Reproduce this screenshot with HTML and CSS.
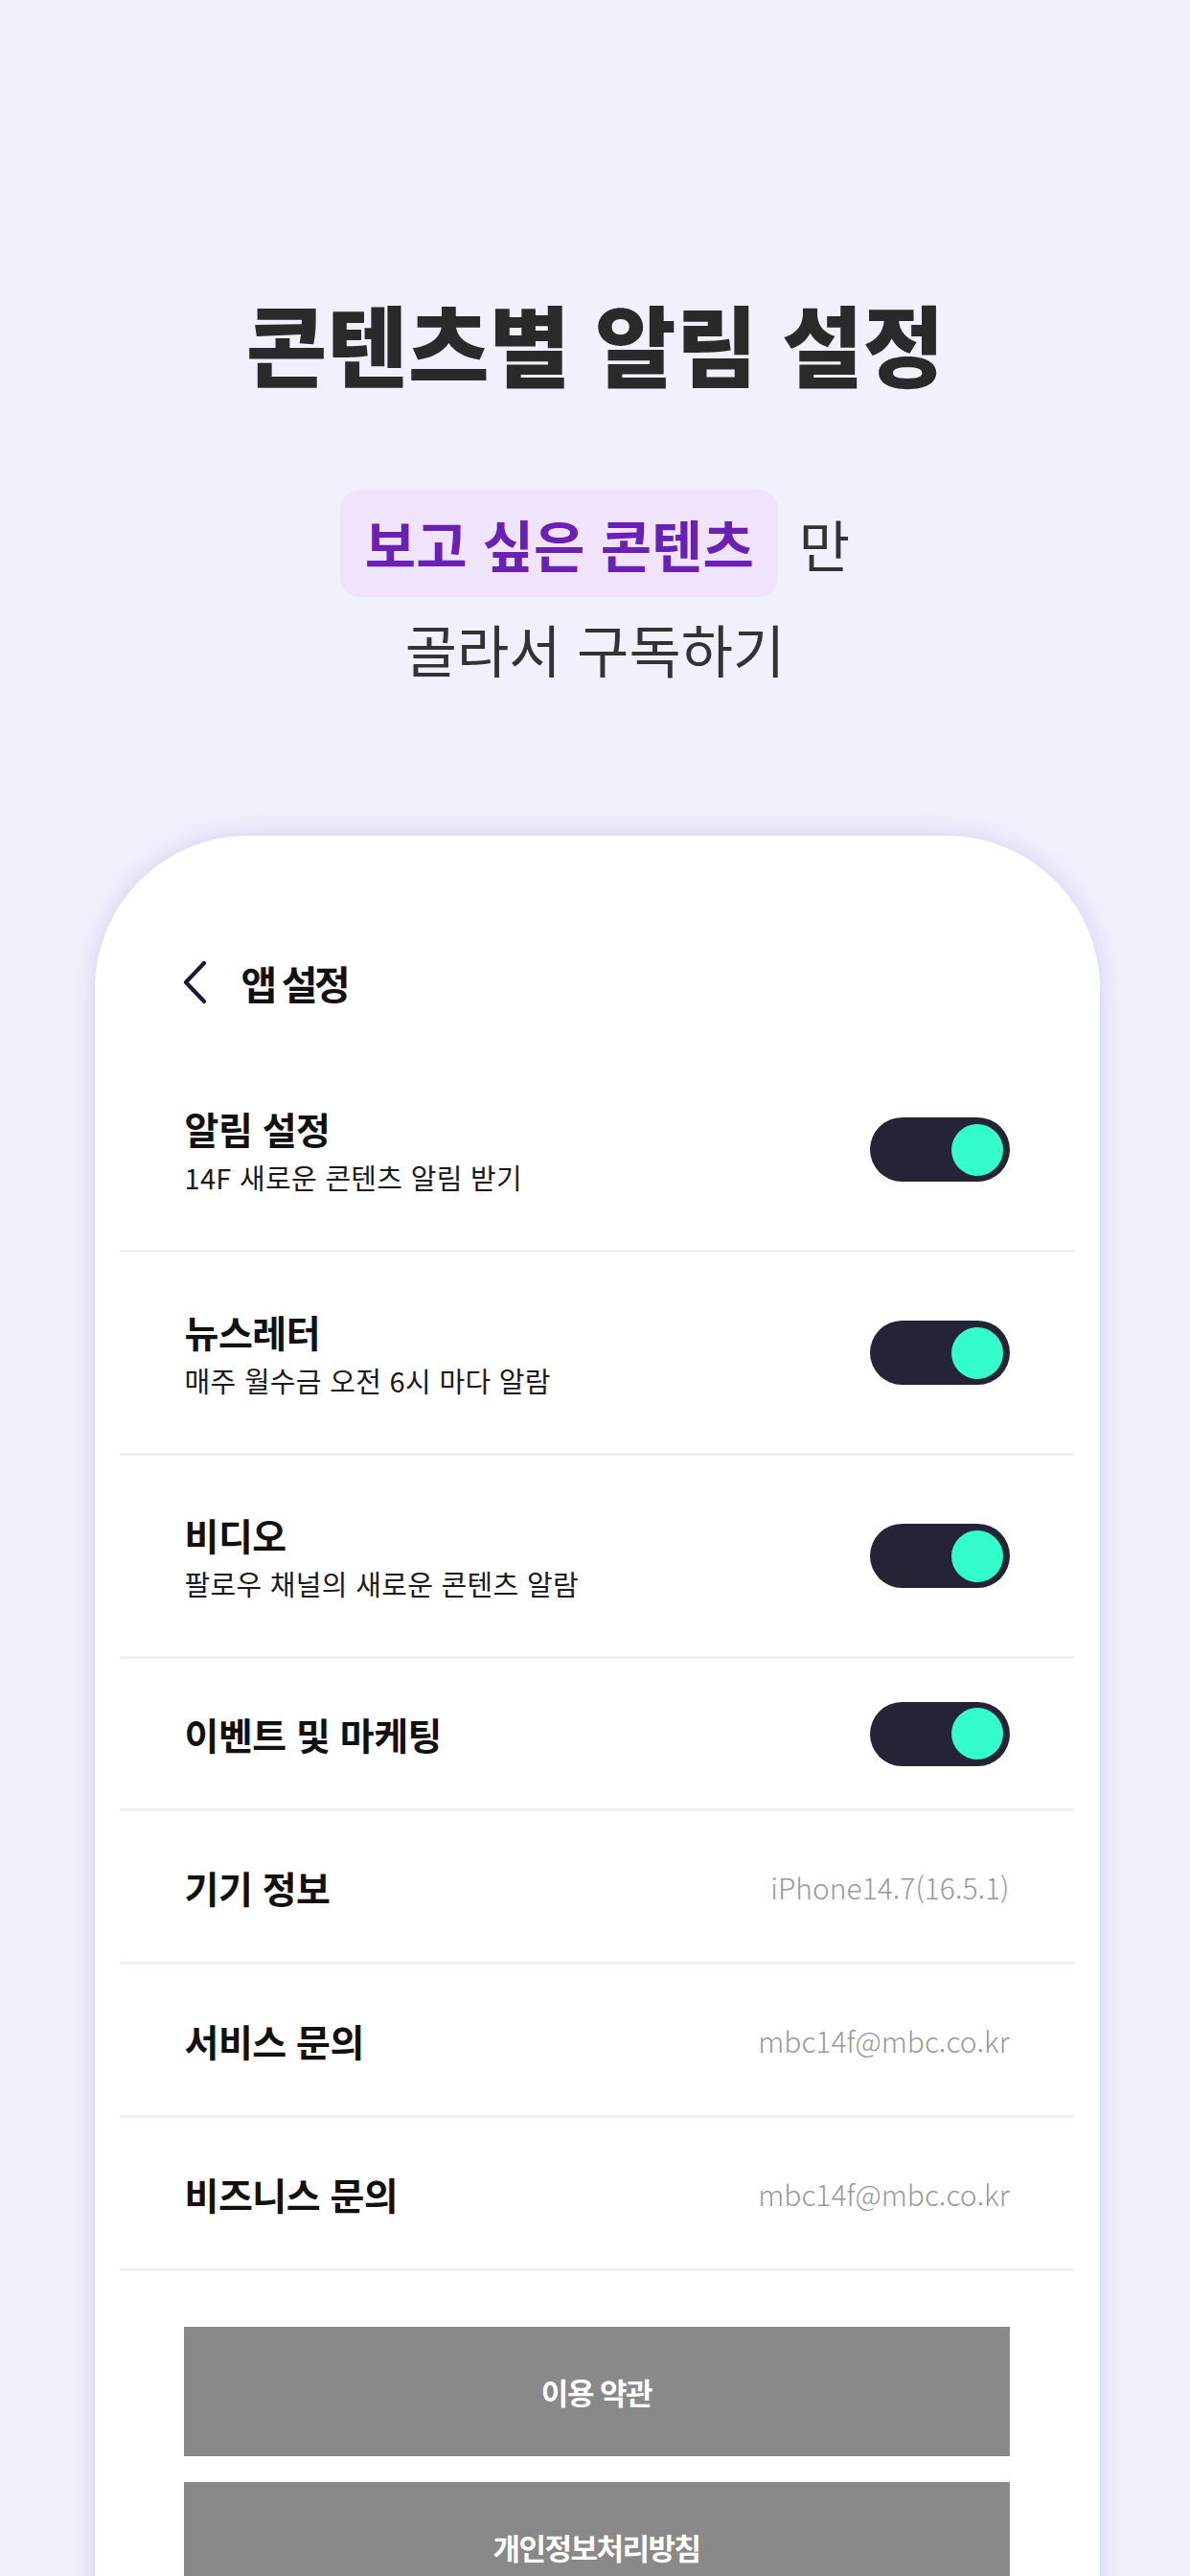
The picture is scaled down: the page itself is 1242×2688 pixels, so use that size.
FILE: index.html
```html
<!DOCTYPE html>
<html lang="ko">
<head>
<meta charset="utf-8">
<title>콘텐츠별 알림 설정</title>
<link rel="stylesheet" href="styles.css">
</head>
<body>
<main class="page">
  <section class="hero">
    <h1 class="hero-title">콘텐츠별 알림 설정</h1>
    <p class="hero-line"><span class="pill">보고 싶은 콘텐츠</span><span class="after">만</span></p>
    <p class="hero-line2">골라서 구독하기</p>
  </section>

  <section class="phone">
    <header class="app-header">
      <svg class="back" width="27" height="46" viewBox="0 0 27 46" aria-hidden="true">
        <polyline points="22,3 3,23 22,43" fill="none" stroke="#1c1a33" stroke-width="4.2" stroke-linecap="round" stroke-linejoin="round"/>
      </svg>
      <span class="app-title">앱 설정</span>
    </header>

    <ul class="settings">
      <li class="row row-tall">
        <div class="row-text">
          <div class="row-title">알림 설정</div>
          <div class="row-sub">14F 새로운 콘텐츠 알림 받기</div>
        </div>
        <span class="toggle"><span class="knob"></span></span>
      </li>
      <li class="row row-tall">
        <div class="row-text">
          <div class="row-title">뉴스레터</div>
          <div class="row-sub">매주 월수금 오전 6시 마다 알람</div>
        </div>
        <span class="toggle"><span class="knob"></span></span>
      </li>
      <li class="row row-tall">
        <div class="row-text">
          <div class="row-title">비디오</div>
          <div class="row-sub">팔로우 채널의 새로운 콘텐츠 알람</div>
        </div>
        <span class="toggle"><span class="knob"></span></span>
      </li>
      <li class="row row-mid">
        <div class="row-text">
          <div class="row-title">이벤트 및 마케팅</div>
        </div>
        <span class="toggle"><span class="knob"></span></span>
      </li>
      <li class="row row-info">
        <div class="row-title">기기 정보</div>
        <div class="row-value">iPhone14.7(16.5.1)</div>
      </li>
      <li class="row row-info">
        <div class="row-title">서비스 문의</div>
        <div class="row-value">mbc14f@mbc.co.kr</div>
      </li>
      <li class="row row-info">
        <div class="row-title">비즈니스 문의</div>
        <div class="row-value">mbc14f@mbc.co.kr</div>
      </li>
    </ul>

    <div class="buttons">
      <button class="btn" type="button">이용 약관</button>
      <button class="btn" type="button">개인정보처리방침</button>
    </div>
  </section>
</main>
</body>
</html>
```

FILE: styles.css
```css
* { box-sizing: border-box; }

html, body {
  margin: 0;
  padding: 0;
}

body {
  width: 1242px;
  height: 2688px;
  overflow: hidden;
  background: #f1f1fd;
  font-family: "Noto Sans CJK KR", "Noto Sans", sans-serif;
  color: #2a2a2a;
}

.page {
  display: flex;
  flex-direction: column;
  align-items: center;
}

/* ---------- hero ---------- */
.hero {
  padding-top: 307px;
  display: flex;
  flex-direction: column;
  align-items: center;
}

.hero-title {
  margin: 0;
  font-size: 92px;
  line-height: 100px;
  font-weight: 900;
  letter-spacing: 0;
  color: #2a2a2a;
}

.hero-line {
  margin: 104px 0 0;
  display: flex;
  align-items: center;
  height: 112px;
}

.pill {
  display: inline-flex;
  align-items: center;
  height: 112px;
  padding: 0 25px 0 26px;
  border-radius: 20px;
  background: #f0e3fc;
  color: #6a20b4;
  font-size: 58px;
  font-weight: 700;
  letter-spacing: 0;
}

.after {
  margin-left: 22px;
  font-size: 58px;
  font-weight: 400;
  color: #333;
}

.hero-line2 {
  margin: 19px 0 0;
  font-size: 59px;
  line-height: 70px;
  font-weight: 400;
  letter-spacing: 0;
  color: #333;
}

/* ---------- phone card ---------- */
.phone {
  margin-top: 160px;
  margin-left: 4px;
  width: 1049px;
  min-height: 1900px;
  background: #fff;
  border-radius: 160px 160px 0 0;
  box-shadow: 0 0 28px rgba(170, 170, 225, 0.45);
  padding-top: 113px;
}

.app-header {
  height: 80px;
  margin: 0 0 30px;
  padding-left: 92px;
  display: flex;
  align-items: center;
  gap: 34px;
}

.back { display: block; }

.app-title {
  font-size: 41px;
  font-weight: 700;
  letter-spacing: -3.5px;
  color: #111;
}

/* ---------- settings list ---------- */
.settings {
  list-style: none;
  margin: 0 27px 0 26px;
  padding: 0;
}

.row {
  display: flex;
  align-items: center;
  justify-content: space-between;
  padding: 0 67px 0 68px;
  border-bottom: 3px solid #f0f0f3;
}

.row-tall { height: 212px; }
.row-mid { height: 159px; }
.row-info { height: 160px; }

.row-text {
  display: flex;
  flex-direction: column;
  gap: 10px;
}

.row-title {
  font-size: 39px;
  line-height: 46px;
  font-weight: 700;
  letter-spacing: -0.5px;
  color: #111;
}

.row-sub {
  font-size: 29px;
  line-height: 36px;
  font-weight: 400;
  letter-spacing: 0.3px;
  color: #1a1a1a;
}

.row-value {
  font-size: 30px;
  font-weight: 300;
  letter-spacing: 0;
  color: #999;
}

.toggle {
  position: relative;
  width: 146px;
  height: 67px;
  border-radius: 34px;
  background: #252436;
  flex-shrink: 0;
}

.knob {
  position: absolute;
  right: 7px;
  top: 6.5px;
  width: 54px;
  height: 54px;
  border-radius: 50%;
  background: #33fdca;
}

/* ---------- buttons ---------- */
.buttons {
  margin-top: 58px;
  padding: 0 94px 0 93px;
  display: flex;
  flex-direction: column;
  gap: 27px;
}

.btn {
  height: 135px;
  border: 0;
  border-radius: 0;
  background: #898989;
  color: #fff;
  font-family: "Noto Sans CJK KR", "Noto Sans", sans-serif;
  font-size: 31px;
  font-weight: 700;
  letter-spacing: -1.5px;
}
```
